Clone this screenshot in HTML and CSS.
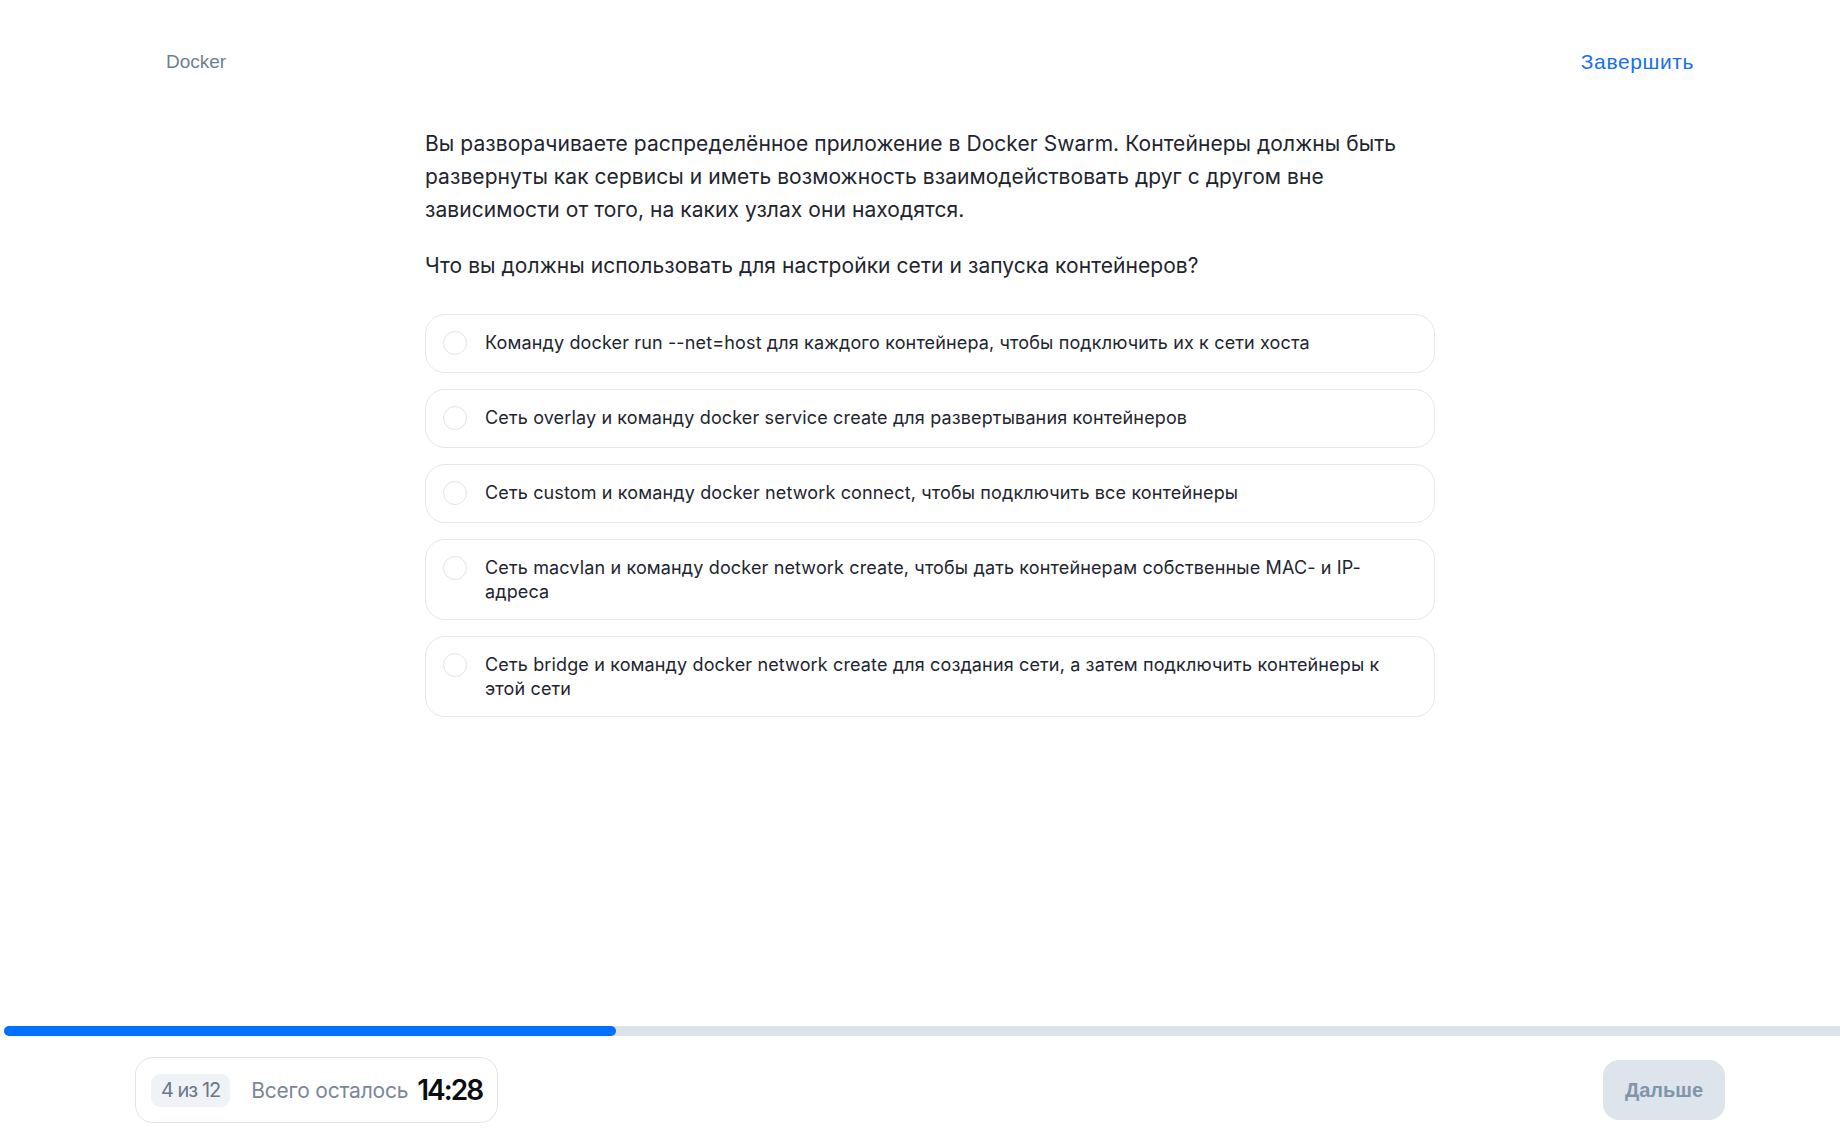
FILE: index.html
```html
<!DOCTYPE html>
<html lang="ru">
<head>
<meta charset="utf-8">
<title>Docker — тест</title>
<link rel="stylesheet" href="styles.css">
</head>
<body>
<div class="page">
  <header class="topbar">
    <span class="topic">Docker</span>
    <a class="finish" href="#">Завершить</a>
  </header>

  <main class="quiz">
    <p class="question">Вы разворачиваете распределённое приложение в Docker Swarm. Контейнеры должны быть развернуты как сервисы и иметь возможность взаимодействовать друг с другом вне зависимости от того, на каких узлах они находятся.</p>
    <p class="question ask">Что вы должны использовать для настройки сети и запуска контейнеров?</p>

    <ul class="options">
      <li class="option"><span class="radio"></span><span class="label">Команду docker run --net=host для каждого контейнера, чтобы подключить их к сети хоста</span></li>
      <li class="option"><span class="radio"></span><span class="label">Сеть overlay и команду docker service create для развертывания контейнеров</span></li>
      <li class="option"><span class="radio"></span><span class="label">Сеть custom и команду docker network connect, чтобы подключить все контейнеры</span></li>
      <li class="option"><span class="radio"></span><span class="label">Сеть macvlan и команду docker network create, чтобы дать контейнерам собственные MAC- и IP-адреса</span></li>
      <li class="option"><span class="radio"></span><span class="label">Сеть bridge и команду docker network create для создания сети, а затем подключить контейнеры к этой сети</span></li>
    </ul>
  </main>

  <div class="progress"><div class="progress-fill" style="width: 33.333%"></div></div>

  <footer class="bottombar">
    <div class="status">
      <span class="counter">4 из 12</span>
      <span class="remain">Всего осталось</span>
      <span class="timer">14:28</span>
    </div>
    <button class="next" type="button">Дальше</button>
  </footer>
</div>
</body>
</html>
```

FILE: styles.css
```css
* { box-sizing: border-box; }

html, body {
  margin: 0;
  padding: 0;
  background: #ffffff;
}

body {
  font-family: "Inter", "Liberation Sans", sans-serif;
  color: #1e2530;
}

.page {
  height: 100vh;
  display: flex;
  flex-direction: column;
}

.topbar {
  height: 124px;
  flex: none;
  display: flex;
  align-items: center;
  justify-content: space-between;
  padding: 0 146px 0 166px;
  font-family: "Liberation Sans", Arial, sans-serif;
}

.topic {
  font-size: 19px;
  color: #6f7f92;
}

.finish {
  font-size: 21px;
  letter-spacing: 0.6px;
  color: #1570f2;
  text-decoration: none;
}

.quiz {
  flex: 1;
  width: 1010px;
  margin-left: 425px;
  padding-top: 3px;
}

.question {
  margin: 0;
  max-width: 985px;
  font-size: 21px;
  line-height: 33px;
  letter-spacing: 0.06px;
  color: #1e2530;
}

.question.ask {
  margin-top: 23px;
}

.options {
  list-style: none;
  margin: 32px 0 0;
  padding: 0;
  display: flex;
  flex-direction: column;
  gap: 16px;
}

.option {
  display: flex;
  align-items: flex-start;
  gap: 18px;
  border: 1px solid #e3e8ef;
  border-radius: 20px;
  padding: 16px 38px 16px 17px;
  min-height: 59px;
}

.radio {
  flex: none;
  width: 24px;
  height: 24px;
  border: 1px solid #dfe5ee;
  border-radius: 50%;
  background: #fff;
}

.label {
  font-size: 18px;
  line-height: 23.5px;
  letter-spacing: 0.14px;
  color: #1e2530;
}

.progress {
  flex: none;
  height: 10px;
  margin-left: 4px;
  background: #dde3ea;
  border-radius: 5px 0 0 5px;
}

.progress-fill {
  height: 100%;
  background: #0070ff;
  border-radius: 5px;
}

.bottombar {
  flex: none;
  height: 108px;
  display: flex;
  align-items: center;
  justify-content: space-between;
  padding: 0 115px 0 135px;
}

.status {
  display: flex;
  align-items: center;
  height: 66px;
  border: 1px solid #e0e6ee;
  border-radius: 18px;
  padding: 0 15px 0 15px;
}

.counter {
  height: 33px;
  display: flex;
  align-items: center;
  padding: 0 10px;
  background: #eff3f8;
  border-radius: 9px;
  font-size: 20px;
  letter-spacing: -1px;
  color: #6c7787;
}

.remain {
  margin-left: 21px;
  font-size: 21px;
  letter-spacing: -0.2px;
  color: #7b8798;
}

.timer {
  margin-left: 9px;
  font-size: 28px;
  font-weight: 600;
  letter-spacing: -2px;
  color: #0b0d10;
}

.next {
  width: 122px;
  height: 60px;
  border: none;
  border-radius: 16px;
  background: #dde4ec;
  color: #8095aa;
  font-family: "Liberation Sans", Arial, sans-serif;
  font-weight: 700;
  font-size: 20px;
  padding: 0;
  cursor: default;
}
```
